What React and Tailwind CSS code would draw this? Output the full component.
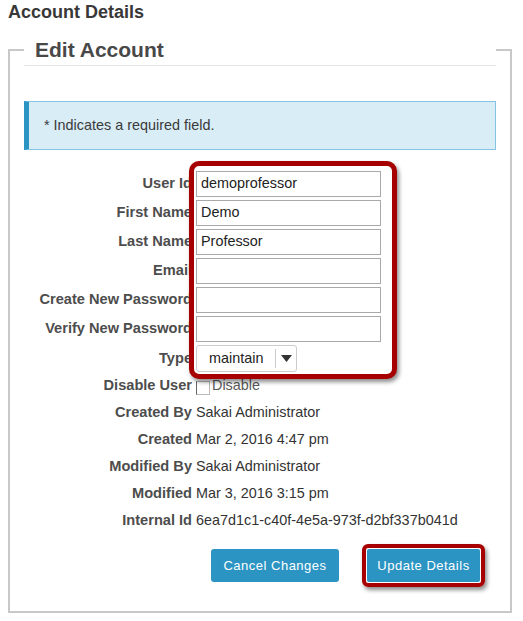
export default function App() {
  const inputs = [
    { label: "User Id", value: "demoprofessor" },
    { label: "First Name", value: "Demo" },
    { label: "Last Name", value: "Professor" },
    { label: "Email", value: "" },
    { label: "Create New Password", value: "" },
    { label: "Verify New Password", value: "" },
  ];
  const info = [
    { label: "Created By", value: "Sakai Administrator" },
    { label: "Created", value: "Mar 2, 2016 4:47 pm" },
    { label: "Modified By", value: "Sakai Administrator" },
    { label: "Modified", value: "Mar 3, 2016 3:15 pm" },
    { label: "Internal Id", value: "6ea7d1c1-c40f-4e5a-973f-d2bf337b041d" },
  ];

  return (
    <div className="w-[523px] h-[621px] bg-white font-['Liberation_Sans',Arial,sans-serif] overflow-hidden">
      <h2 className="pl-2 text-[18px] leading-6 font-bold text-[#383838]">Account Details</h2>

      <fieldset className="mt-[10px] ml-2 w-[504px] border-2 border-[#c8c8c8] px-[14px] pb-[24px]">
        <legend className="w-full pl-[11px] text-[21px] leading-[31px] font-bold text-[#484848] border-b border-[#e5e5e5]">
          Edit Account
        </legend>

        <div className="mt-[35px] h-[49px] flex items-center bg-[#d9edf7] border border-[#85c5e3] border-l-[5px] border-l-[#2b94c2] pl-[15px] text-[14.4px] text-[#3a3a3a]">
          * Indicates a required field.
        </div>

        <div className="relative mt-[21px]">
          {/* callout box over the edit fields */}
          <div className="absolute left-[165px] top-[-10px] w-[208px] h-[218px] z-10 bg-white border-[5px] border-[#a60000] rounded-[10px] shadow-[2px_3px_4px_rgba(0,0,0,0.45)]"></div>

          <div className="flex flex-col gap-[3px]">
            {inputs.map((row) => (
              <div key={row.label} className="flex items-center h-[26px]">
                <div className="w-[168px] text-right text-[14.6px] font-bold text-[#4d4d4d] whitespace-nowrap">{row.label}</div>
                <div className="relative z-20 ml-[4px] w-[185px] h-[26px] border border-[#a9a9a9] bg-white px-[4px] flex items-center text-[14.4px] text-[#222]">
                  {row.value}
                </div>
              </div>
            ))}
            <div className="flex items-center h-[27px]">
              <div className="w-[168px] text-right text-[14.6px] font-bold text-[#4d4d4d]">Type</div>
              <div className="relative z-20 ml-[4px] w-[101px] h-[27px] border border-[#ccc] rounded-[3px] bg-white flex items-center text-[14.4px] text-[#222]">
                <span className="pl-[12px] w-[78px]">maintain</span>
                <span className="h-[19px] border-l border-[#ccc]"></span>
                <svg width="11" height="7" viewBox="0 0 11 7" className="ml-[5px]">
                  <path d="M0 0 L11 0 L5.5 7 Z" fill="#333" />
                </svg>
              </div>
            </div>
          </div>

          <div className="flex items-center h-[27px]">
            <div className="w-[168px] text-right text-[14.6px] font-bold text-[#4d4d4d]">Disable User</div>
            <span className="ml-[4px] w-[14px] h-[14px] border border-[#bbb] border-l-[#666] bg-white mt-[4px]"></span>
            <span className="ml-[2px] text-[14.4px] text-[#5a5a5a]">Disable</span>
          </div>
          {info.map((row) => (
            <div key={row.label} className="flex items-center h-[27px]">
              <div className="w-[168px] text-right text-[14.6px] font-bold text-[#4d4d4d]">{row.label}</div>
              <div className="ml-[4px] text-[14.4px] text-[#333] whitespace-nowrap">{row.value}</div>
            </div>
          ))}
        </div>

        <div className="mt-[10px] flex items-center pl-[187px]">
          <button className="w-[128px] h-[33px] rounded-[3px] bg-[#2b94c3] text-white text-[13px] tracking-[0.5px]">
            Cancel Changes
          </button>
          <div className="ml-[23px] p-[1px] border-[4px] border-[#a60000] rounded-[6px] shadow-[2px_3px_4px_rgba(0,0,0,0.45)]">
            <button className="block w-[113px] h-[33px] rounded-[2px] bg-[#2b94c3] text-white text-[13px] tracking-[0.5px]">
              Update Details
            </button>
          </div>
        </div>
      </fieldset>
    </div>
  );
}
